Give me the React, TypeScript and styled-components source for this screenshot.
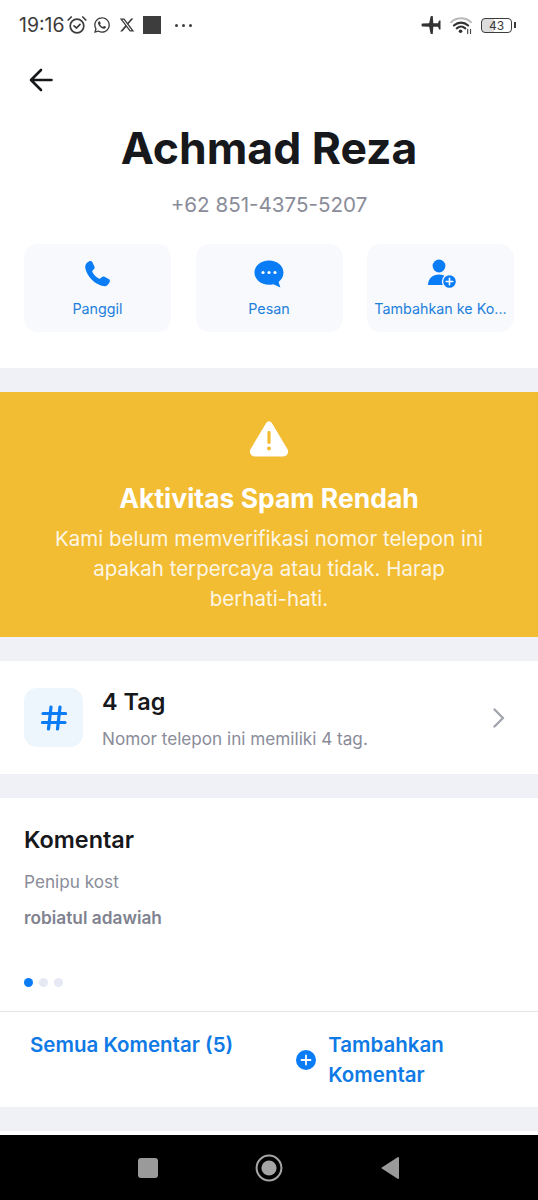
import React from "react";
import styled, { createGlobalStyle } from "styled-components";
import { FaXTwitter, FaWhatsapp } from "react-icons/fa6";

const GlobalStyle = createGlobalStyle`
  html, body {
    margin: 0;
    padding: 0;
    background: #fff;
  }
  body {
    font-family: Inter, "Liberation Sans", sans-serif;
    -webkit-font-smoothing: antialiased;
  }
  * {
    box-sizing: border-box;
  }
`;

const Page = styled.div`
  width: 538px;
  height: 1200px;
  display: flex;
  flex-direction: column;
  overflow: hidden;
  background: #fff;
`;

const StatusBar = styled.div`
  height: 50px;
  padding: 0 26px 0 19px;
  display: flex;
  align-items: center;
  justify-content: space-between;
  color: #3c3c3c;
`;

const StatusGroup = styled.div`
  display: flex;
  align-items: center;
`;

const Clock = styled.span`
  font-size: 19.4px;
  margin-right: 3px;
`;

const AppIcons = styled.span`
  display: flex;
  align-items: center;
  gap: 8px;
  margin-left: 6px;
  margin-right: 8px;
`;

const StopSquare = styled.span`
  width: 18px;
  height: 18px;
  background: #3d3d3d;
`;

const MoreDots = styled.span`
  display: flex;
  gap: 4px;
  margin-left: 6px;
  i {
    width: 3px;
    height: 3px;
    border-radius: 50%;
    background: #3d3d3d;
  }
`;

const WifiSlot = styled.span`
  display: flex;
  margin-left: 8px;
`;

const Battery = styled.span`
  width: 31px;
  height: 15px;
  border: 1.3px solid #3c3c3c;
  border-radius: 4px;
  margin-left: 8px;
  font-size: 12px;
  line-height: 13px;
  text-align: center;
  position: relative;
  background: linear-gradient(90deg, #dcdcdc 43%, #fff 43%);
  &::after {
    content: "";
    position: absolute;
    right: -5px;
    top: 3px;
    width: 2px;
    height: 6px;
    background: #3c3c3c;
  }
`;

const BackRow = styled.div`
  height: 68px;
  padding: 18px 0 0 29px;
  display: flex;
`;

const Name = styled.h1`
  margin: 0;
  height: 60px;
  text-align: center;
  font-size: 44.5px;
  line-height: 60px;
  font-weight: 700;
  color: #17181c;
`;

const Phone = styled.div`
  margin-top: 14px;
  text-align: center;
  font-size: 20.6px;
  line-height: 26px;
  color: #8a8c99;
`;

const Actions = styled.div`
  margin-top: 26px;
  padding: 0 24px;
  display: grid;
  grid-template-columns: repeat(3, 147px);
  justify-content: space-between;
`;

const ActionCard = styled.div`
  height: 88px;
  border-radius: 14px;
  background: #f7f9fc;
  display: flex;
  flex-direction: column;
  align-items: center;
  padding-top: 14px;
`;

const ActionIcon = styled.div`
  width: 32px;
  height: 32px;
  display: flex;
  align-items: center;
  justify-content: center;
`;

const ActionLabel = styled.span`
  margin-top: 9px;
  font-size: 14.3px;
  line-height: 20px;
  color: #1e7fdc;
  white-space: nowrap;
`;

const Gap = styled.div<{ $top?: number }>`
  height: 24px;
  flex: none;
  margin-top: ${(p) => p.$top ?? 0}px;
  background: #f0f1f6;
`;

const Banner = styled.div`
  height: 245px;
  background: #f2bc33;
  display: flex;
  flex-direction: column;
  align-items: center;
  padding-top: 28px;
  color: #fff;
  text-align: center;
`;

const BannerTitle = styled.div`
  margin-top: 23px;
  font-size: 26.5px;
  line-height: 34px;
  font-weight: 700;
`;

const BannerText = styled.div`
  margin-top: 9px;
  width: 432px;
  font-size: 20.5px;
  line-height: 30px;
  color: #fdf6e3;
`;

const TagRow = styled.div`
  height: 113px;
  padding: 0 33px 0 24px;
  display: flex;
  align-items: center;
`;

const TagIcon = styled.div`
  width: 59px;
  height: 59px;
  flex: none;
  border-radius: 13px;
  background: #edf5fd;
  display: flex;
  align-items: center;
  justify-content: center;
`;

const TagBody = styled.div`
  flex: 1;
  margin-left: 19px;
  padding-top: 2px;
  display: flex;
  flex-direction: column;
`;

const TagTitle = styled.div`
  font-size: 23.4px;
  line-height: 30px;
  font-weight: 600;
  color: #17181c;
`;

const TagSub = styled.div`
  margin-top: 10px;
  font-size: 17.15px;
  line-height: 24px;
  color: #8a8c99;
`;

const Comments = styled.div`
  height: 214px;
  padding: 26px 24px 0;
  display: flex;
  flex-direction: column;
  border-bottom: 1px solid #e3e4e9;
`;

const CommentsTitle = styled.div`
  font-size: 23.4px;
  line-height: 32px;
  font-weight: 600;
  color: #17181c;
`;

const CommentText = styled.div`
  margin-top: 14px;
  font-size: 17.2px;
  line-height: 24px;
  color: #8a8c99;
`;

const CommentAuthor = styled.div`
  margin-top: 12px;
  font-size: 17.3px;
  line-height: 24px;
  font-weight: 600;
  color: #80828f;
`;

const Dots = styled.div`
  display: flex;
  gap: 6px;
  margin-top: 48px;
`;

const Dot = styled.span<{ $active?: boolean }>`
  width: 9px;
  height: 9px;
  border-radius: 50%;
  background: ${(p) => (p.$active ? "#0a7cf5" : "#e6e9f4")};
`;

const Footer = styled.div`
  height: 95px;
  display: flex;
  padding: 18px 0 0 30px;
`;

const FooterLink = styled.div`
  font-size: 20.5px;
  line-height: 30px;
  font-weight: 600;
  color: #0f7ae5;
`;

const AddLink = styled.div`
  margin-left: 63px;
  display: flex;
  align-items: center;
  gap: 14px;
  height: 60px;
`;

const AddText = styled(FooterLink)`
  margin-left: -2px;
`;

const NavBar = styled.div`
  margin-top: 4px;
  flex: 1;
  background: #000;
  display: flex;
  align-items: center;
  justify-content: center;
  gap: 97px;
`;

const NavSquare = styled.span`
  width: 20px;
  height: 20px;
  border-radius: 3px;
  background: #9a9a9a;
`;

const Warning = () => (
  <svg width="42" height="38" viewBox="0 0 42 38">
    <path
      d="M21 5 L36.5 31 Q37 33 35 33 H7 Q5 33 5.5 31 Z"
      fill="#fff"
      stroke="#fff"
      strokeWidth="7"
      strokeLinejoin="round"
    />
    <rect x="19.4" y="11" width="3.2" height="13" rx="1.4" fill="#f2bc33" />
    <circle cx="21" cy="28.5" r="2" fill="#f2bc33" />
  </svg>
);

const AlarmIcon = () => (
  <svg width="20" height="20" viewBox="0 0 20 20" fill="none" stroke="#3c3c3c" strokeWidth="1.7" strokeLinecap="round" strokeLinejoin="round">
    <circle cx="10" cy="11" r="6.8" />
    <path d="M7 10.8 L9.6 13 L13 9.4" />
    <path d="M1.2 5 L4.2 2 M18.8 5 L15.8 2" />
  </svg>
);

const Plane = () => (
  <svg width="21" height="18" viewBox="0 0 22 20" fill="#333">
    <path d="M0 9.3 Q0 8.6 1 8.4 L8.4 8 L10 0.6 Q10.2 0 11 0 L12.4 0 L13 8 L18.2 8 L19.4 5 L21 5 L21 15 L19.4 15 L18.2 12 L13 12 L12.4 20 L11 20 Q10.2 20 10 19.4 L8.4 12 L1 11.6 Q0 11.4 0 10.7 Z" />
  </svg>
);

const Wifi = () => (
  <svg width="23" height="19" viewBox="0 0 24 20" fill="none" strokeLinecap="round">
    <path d="M1 6.5 C7 1 16 1 22 6.5" stroke="#b9b9b9" strokeWidth="2" />
    <path d="M4 10 C8.5 6 14.5 6 19 10" stroke="#333" strokeWidth="2.2" />
    <path d="M7 13 C9.8 10.6 13.2 10.6 16 13" stroke="#333" strokeWidth="2.2" />
    <circle cx="11" cy="16" r="1.9" fill="#333" />
    <path d="M18.5 14 V18.5 M21.5 14 V18.5" stroke="#444" strokeWidth="1.2" />
  </svg>
);

const PhoneIcon = () => (
  <svg width="28" height="28" viewBox="1 0 28 28">
    <path
      d="M6.4 1.2 C7.6 0.7 8.8 1.2 9.4 2.3 L11.4 6.4 C11.9 7.5 11.6 8.6 10.8 9.3 L9.6 10.4 C9.1 10.9 9.1 11.5 9.4 12.1 C10.8 14.8 13 17.1 15.8 18.6 C16.4 18.9 17 18.8 17.5 18.3 L18.7 17.2 C19.5 16.4 20.6 16.3 21.5 16.8 L25.7 19.1 C26.9 19.8 27.2 21 26.6 22.2 C25.5 24.4 23.8 26.4 21.3 26.2 C12.2 25.4 3.6 16.4 2.2 7.6 C1.8 4.8 3.8 2.4 6.4 1.2 Z"
      fill="#0a7cf5"
    />
  </svg>
);

const ChatIcon = () => (
  <svg width="30" height="28" viewBox="0 0 30 28">
    <path
      d="M15 0.5 C23.2 0.5 29.5 5.8 29.5 12.6 C29.5 16.6 27.4 19.8 24.6 22 L26.4 27.4 L19.4 24.2 C18 24.6 16.6 24.8 15 24.8 C6.8 24.8 0.5 19.4 0.5 12.6 C0.5 5.8 6.8 0.5 15 0.5 Z"
      fill="#0a7cf5"
    />
    <circle cx="9" cy="12.5" r="1.6" fill="#fff" />
    <circle cx="15" cy="12.5" r="1.6" fill="#fff" />
    <circle cx="21" cy="12.5" r="1.6" fill="#fff" />
  </svg>
);

const AddContact = () => (
  <svg width="30" height="30" viewBox="-1 0 30 30">
    <circle cx="12" cy="7" r="6.4" fill="#0a7cf5" />
    <path d="M1 26 C1 19 6 15.4 12 15.4 C18 15.4 23 19 23 26 Z" fill="#0a7cf5" />
    <circle cx="22.5" cy="22.5" r="7" fill="#0a7cf5" stroke="#f7f9fc" strokeWidth="1.4" />
    <path d="M22.5 19.2 V25.8 M19.2 22.5 H25.8" stroke="#fff" strokeWidth="1.6" strokeLinecap="round" />
  </svg>
);

const App: React.FC = () => (
  <Page>
    <GlobalStyle />
    <StatusBar>
      <StatusGroup>
        <Clock>19:16</Clock>
        <AlarmIcon />
        <AppIcons>
          <FaWhatsapp size={18} />
          <FaXTwitter size={16} />
          <StopSquare />
        </AppIcons>
        <MoreDots>
          <i />
          <i />
          <i />
        </MoreDots>
      </StatusGroup>
      <StatusGroup>
        <Plane />
        <WifiSlot>
          <Wifi />
        </WifiSlot>
        <Battery>43</Battery>
      </StatusGroup>
    </StatusBar>

    <BackRow>
      <svg width="24" height="24" viewBox="0 0 24 24" fill="none" stroke="#17181c" strokeWidth="2.6" strokeLinecap="round" strokeLinejoin="round">
        <path d="M22.5 12 H2.5 M12 2 L2 12 L12 22" />
      </svg>
    </BackRow>

    <Name>Achmad Reza</Name>
    <Phone>+62 851-4375-5207</Phone>

    <Actions>
      <ActionCard>
        <ActionIcon>
          <PhoneIcon />
        </ActionIcon>
        <ActionLabel>Panggil</ActionLabel>
      </ActionCard>
      <ActionCard>
        <ActionIcon>
          <ChatIcon />
        </ActionIcon>
        <ActionLabel>Pesan</ActionLabel>
      </ActionCard>
      <ActionCard>
        <ActionIcon>
          <AddContact />
        </ActionIcon>
        <ActionLabel>Tambahkan ke Ko...</ActionLabel>
      </ActionCard>
    </Actions>

    <Gap $top={36} />
    <Banner>
      <Warning />
      <BannerTitle>Aktivitas Spam Rendah</BannerTitle>
      <BannerText>
        Kami belum memverifikasi nomor telepon ini apakah terpercaya atau tidak. Harap berhati-hati.
      </BannerText>
    </Banner>
    <Gap />

    <TagRow>
      <TagIcon>
        <svg width="26" height="26" viewBox="0 0 26 26" fill="none" stroke="#0a7cf5" strokeWidth="3.2" strokeLinecap="round">
          <path d="M2 8.5 H24.5 M1.5 17.5 H24 M10 2 L7.5 24 M19 2 L16.5 24" />
        </svg>
      </TagIcon>
      <TagBody>
        <TagTitle>4 Tag</TagTitle>
        <TagSub>Nomor telepon ini memiliki 4 tag.</TagSub>
      </TagBody>
      <svg width="12" height="20" viewBox="0 0 12 20" fill="none" stroke="#a3a5ae" strokeWidth="2.4" strokeLinecap="round" strokeLinejoin="round">
        <path d="M1.5 1.5 L10 10 L1.5 18.5" />
      </svg>
    </TagRow>
    <Gap />

    <Comments>
      <CommentsTitle>Komentar</CommentsTitle>
      <CommentText>Penipu kost</CommentText>
      <CommentAuthor>robiatul adawiah</CommentAuthor>
      <Dots>
        <Dot $active />
        <Dot />
        <Dot />
      </Dots>
    </Comments>

    <Footer>
      <FooterLink>Semua Komentar (5)</FooterLink>
      <AddLink>
        <svg width="20" height="20" viewBox="0 0 20 20">
          <circle cx="10" cy="10" r="10" fill="#0a7cf5" />
          <path d="M10 5.5 V14.5 M5.5 10 H14.5" stroke="#fff" strokeWidth="1.8" strokeLinecap="round" />
        </svg>
        <AddText>
          Tambahkan
          <br />
          Komentar
        </AddText>
      </AddLink>
    </Footer>
    <Gap />

    <NavBar>
      <NavSquare />
      <svg width="28" height="28" viewBox="0 0 28 28">
        <circle cx="14" cy="14" r="12.4" fill="none" stroke="#a5a5a5" strokeWidth="2" />
        <circle cx="14" cy="14" r="7.6" fill="#a5a5a5" />
      </svg>
      <svg width="20" height="24" viewBox="0 0 20 24">
        <path d="M1 12 L18 1 Q19 1 19 2 V22 Q19 23 18 23 Z" fill="#9a9a9a" />
      </svg>
    </NavBar>
  </Page>
);

export default App;
